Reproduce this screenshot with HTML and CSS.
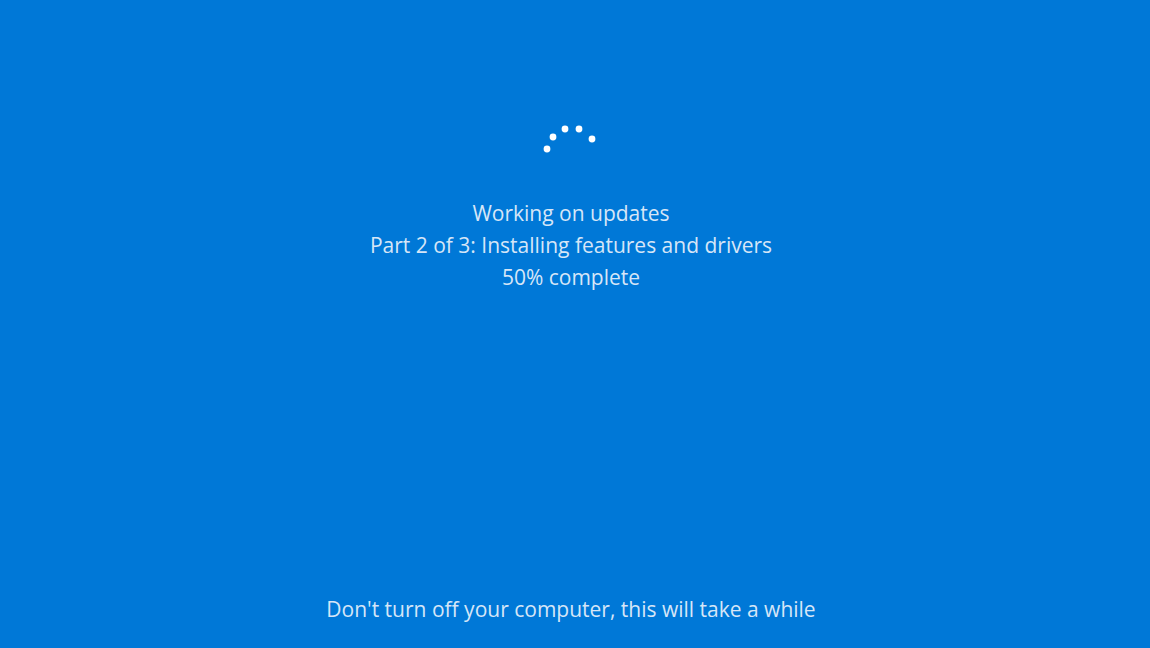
FILE: index.html
```html
<!DOCTYPE html>
<html lang="en">
<head>
<meta charset="utf-8">
<title>Working on updates</title>
<link rel="stylesheet" href="styles.css">
</head>
<body>
<div class="screen">
  <main class="status">
    <svg class="spinner" width="60" height="36" viewBox="0 0 60 36" aria-hidden="true">
      <circle cx="7" cy="29" r="3.4"/>
      <circle cx="13" cy="17" r="3.4"/>
      <circle cx="25" cy="9" r="3.4"/>
      <circle cx="39" cy="9" r="3.4"/>
      <circle cx="52" cy="19" r="3.4"/>
    </svg>
    <div class="messages">
      <p>Working on updates</p>
      <p>Part 2 of 3: Installing features and drivers</p>
      <p>50% complete</p>
    </div>
  </main>
  <footer class="notice">
    <p>Don't turn off your computer, this will take a while</p>
  </footer>
</div>
</body>
</html>
```

FILE: styles.css
```css
html, body {
  margin: 0;
  padding: 0;
  height: 100%;
}
body {
  background: #0078d7;
  font-family: "Open Sans", "Noto Sans", "Liberation Sans", sans-serif;
  color: #d6e6f7;
}
.screen {
  height: 648px;
  display: flex;
  flex-direction: column;
  align-items: center;
  justify-content: space-between;
  box-sizing: border-box;
  padding: 120px 8px 23px 0;
}
.status {
  display: flex;
  flex-direction: column;
  align-items: center;
}
.spinner {
  display: block;
  fill: #ffffff;
  margin-left: -2px;
}
.messages {
  margin-top: 41px;
  text-align: center;
}
p {
  margin: 0;
  font-size: 21px;
  line-height: 32px;
  font-weight: 400;
}
```
